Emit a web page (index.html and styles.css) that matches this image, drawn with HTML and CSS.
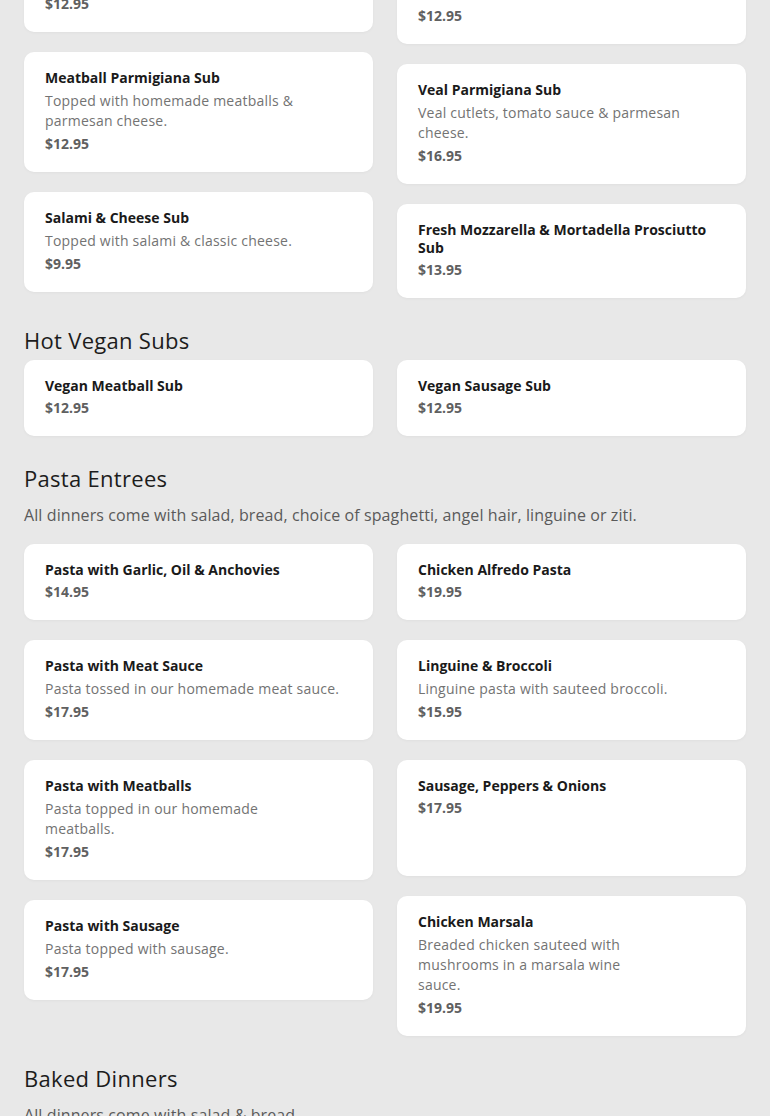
FILE: index.html
```html
<!DOCTYPE html>
<html lang="en">
<head>
<meta charset="utf-8">
<title>Menu</title>
<link rel="stylesheet" href="styles.css">
</head>
<body>
<main class="menu">
  <section class="section section-first">
    <h2 class="section-title">Hot Subs</h2>
    <div class="columns">
      <div class="column">
        <article class="card">
          <div class="card-text">
            <h3 class="item-name">Chicken Parmigiana Sub</h3>
            <p class="item-desc">Breaded chicken, tomato sauce &amp; cheese.</p>
            <p class="item-price">$12.95</p>
          </div>
        </article>
        <article class="card">
          <div class="card-text">
            <h3 class="item-name">Eggplant Parmigiana Sub</h3>
            <p class="item-desc">Breaded eggplant, tomato sauce &amp; parmesan cheese.</p>
            <p class="item-price">$12.95</p>
          </div>
        </article>
        <article class="card">
          <div class="card-text">
            <h3 class="item-name">Meatball Parmigiana Sub</h3>
            <p class="item-desc">Topped with homemade meatballs &amp; parmesan cheese.</p>
            <p class="item-price">$12.95</p>
          </div>
        </article>
        <article class="card">
          <div class="card-text">
            <h3 class="item-name">Salami &amp; Cheese Sub</h3>
            <p class="item-desc">Topped with salami &amp; classic cheese.</p>
            <p class="item-price">$9.95</p>
          </div>
        </article>
      </div>
      <div class="column">
        <article class="card">
          <div class="card-text">
            <h3 class="item-name">Grilled Chicken, Roasted Peppers &amp; Provolone Sub</h3>
            <p class="item-desc">Grilled chicken breast with roasted peppers and melted provolone.</p>
            <p class="item-price">$13.95</p>
          </div>
        </article>
        <article class="card">
          <div class="card-text">
            <h3 class="item-name">Hot Italian Combo with Sausage, Peppers &amp; Onions</h3>
            <p class="item-price">$12.95</p>
          </div>
        </article>
        <article class="card">
          <div class="card-text">
            <h3 class="item-name">Veal Parmigiana Sub</h3>
            <p class="item-desc">Veal cutlets, tomato sauce &amp; parmesan cheese.</p>
            <p class="item-price">$16.95</p>
          </div>
        </article>
        <article class="card">
          <div class="card-text">
            <h3 class="item-name">Fresh Mozzarella &amp; Mortadella Prosciutto Sub</h3>
            <p class="item-price">$13.95</p>
          </div>
        </article>
      </div>
    </div>
  </section>

  <section class="section">
    <h2 class="section-title">Hot Vegan Subs</h2>
    <div class="columns">
      <div class="column">
        <article class="card">
          <div class="card-text">
            <h3 class="item-name">Vegan Meatball Sub</h3>
            <p class="item-price">$12.95</p>
          </div>
        </article>
      </div>
      <div class="column">
        <article class="card">
          <div class="card-text">
            <h3 class="item-name">Vegan Sausage Sub</h3>
            <p class="item-price">$12.95</p>
          </div>
        </article>
      </div>
    </div>
  </section>

  <section class="section">
    <h2 class="section-title">Pasta Entrees</h2>
    <p class="section-desc">All dinners come with salad, bread, choice of spaghetti, angel hair, linguine or ziti.</p>
    <div class="columns">
      <div class="column">
        <article class="card">
          <div class="card-text">
            <h3 class="item-name">Pasta with Garlic, Oil &amp; Anchovies</h3>
            <p class="item-price">$14.95</p>
          </div>
        </article>
        <article class="card">
          <div class="card-text">
            <h3 class="item-name">Pasta with Meat Sauce</h3>
            <p class="item-desc">Pasta tossed in our homemade meat sauce.</p>
            <p class="item-price">$17.95</p>
          </div>
        </article>
        <article class="card">
          <div class="card-text">
            <h3 class="item-name">Pasta with Meatballs</h3>
            <p class="item-desc">Pasta topped in our homemade meatballs.</p>
            <p class="item-price">$17.95</p>
          </div>
          <div class="card-photo" aria-hidden="true"></div>
        </article>
        <article class="card">
          <div class="card-text">
            <h3 class="item-name">Pasta with Sausage</h3>
            <p class="item-desc">Pasta topped with sausage.</p>
            <p class="item-price">$17.95</p>
          </div>
        </article>
      </div>
      <div class="column">
        <article class="card">
          <div class="card-text">
            <h3 class="item-name">Chicken Alfredo Pasta</h3>
            <p class="item-price">$19.95</p>
          </div>
        </article>
        <article class="card">
          <div class="card-text">
            <h3 class="item-name">Linguine &amp; Broccoli</h3>
            <p class="item-desc">Linguine pasta with sauteed broccoli.</p>
            <p class="item-price">$15.95</p>
          </div>
        </article>
        <article class="card">
          <div class="card-text">
            <h3 class="item-name">Sausage, Peppers &amp; Onions</h3>
            <p class="item-price">$17.95</p>
          </div>
          <div class="card-photo" aria-hidden="true"></div>
        </article>
        <article class="card">
          <div class="card-text">
            <h3 class="item-name">Chicken Marsala</h3>
            <p class="item-desc">Breaded chicken sauteed with mushrooms in a marsala wine sauce.</p>
            <p class="item-price">$19.95</p>
          </div>
          <div class="card-photo" aria-hidden="true"></div>
        </article>
      </div>
    </div>
  </section>

  <section class="section">
    <h2 class="section-title">Baked Dinners</h2>
    <p class="section-desc">All dinners come with salad &amp; bread.</p>
    <div class="columns">
      <div class="column">
        <article class="card">
          <div class="card-text">
            <h3 class="item-name">Baked Ziti</h3>
            <p class="item-price">$16.95</p>
          </div>
        </article>
      </div>
      <div class="column">
        <article class="card">
          <div class="card-text">
            <h3 class="item-name">Baked Lasagna</h3>
            <p class="item-price">$18.95</p>
          </div>
        </article>
      </div>
    </div>
  </section>
</main>
</body>
</html>
```
FILE: styles.css
```css
* {
  box-sizing: border-box;
}

html, body {
  margin: 0;
  padding: 0;
  background: #e8e8e8;
}

body {
  font-family: "Open Sans", "Liberation Sans", sans-serif;
  color: #1c1c1c;
  overflow: hidden;
}

.menu {
  padding: 0 24px 40px;
  margin-top: -243px;
}

.section {
  margin-top: 27px;
}

.section-first {
  margin-top: 0;
}

.section-title {
  margin: 0 0 5px;
  font-size: 22px;
  line-height: 30px;
  font-weight: 400;
  letter-spacing: 0.3px;
  color: #1c1c1c;
}

.section-desc {
  margin: 10px 0 17px;
  font-size: 16px;
  line-height: 24px;
  letter-spacing: 0.1px;
  color: #5a5a5a;
}

.columns {
  display: grid;
  grid-template-columns: 1fr 1fr;
  column-gap: 24px;
  align-items: start;
}

.column {
  display: flex;
  flex-direction: column;
  gap: 20px;
}

.card {
  display: flex;
  gap: 12px;
  background: #ffffff;
  border-radius: 10px;
  padding: 17px 21px 19px;
  box-shadow: 0 1px 3px rgba(0, 0, 0, 0.04);
}

.card-text {
  flex: 1;
  min-width: 0;
  display: flex;
  flex-direction: column;
  gap: 4px;
}

.card-photo {
  flex: 0 0 80px;
  height: 80px;
}

.item-name {
  margin: 0;
  font-size: 14px;
  line-height: 18px;
  font-weight: 700;
  color: #1a1a1a;
}

.item-desc {
  margin: 0;
  font-size: 14px;
  line-height: 20px;
  letter-spacing: 0.22px;
  color: #737373;
}

.item-price {
  margin: 0;
  font-size: 14px;
  line-height: 18px;
  font-weight: 700;
  color: #606060;
}
```
